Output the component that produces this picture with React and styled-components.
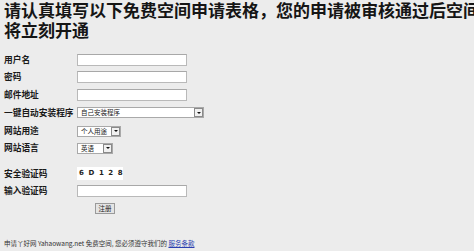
import React from 'react';
import styled, { createGlobalStyle } from 'styled-components';

const cjk = 'font-family: "Noto Sans CJK SC", "Liberation Sans", sans-serif;';

const GlobalStyle = createGlobalStyle`
	html, body {
		margin: 0;
		padding: 0;
		background: #ececec;
		overflow: hidden;
	}
	body {
		width: 474px;
		height: 251px;
	}
`;

const Page = styled.div`
	${cjk}
	padding: 0 0 0 4px;
	color: #111;
`;

const Heading = styled.h1`
	${cjk}
	width: 480px;
	margin: 0;
	font-size: 17px;
	line-height: 20px;
	font-weight: 700;
	color: #151515;
`;

const Form = styled.div`
	display: flex;
	flex-direction: column;
	margin-top: 11px;
`;

const Row = styled.div`
	display: flex;
	align-items: center;
	height: ${props => props.h}px;
`;

const Spacer = styled.div`
	height: ${props => props.h}px;
`;

const Label = styled.div`
	width: 73px;
	flex-shrink: 0;
	font-size: 8.7px;
	font-weight: 700;
	line-height: 10px;
	color: #1a1a1a;
	white-space: nowrap;
`;

const TextBox = styled.div`
	box-sizing: border-box;
	width: 110px;
	height: 12px;
	background: #fff;
	border: 1px solid #b9b9b9;
	border-top-color: #a8a8a8;
`;

const Select = styled.div`
	box-sizing: border-box;
	display: flex;
	align-items: center;
	justify-content: space-between;
	width: ${props => props.w}px;
	height: 11px;
	background: #fff;
	border: 1px solid #a9a9a9;
	padding-left: 3px;
	font-size: 6.5px;
	line-height: 9px;
	color: #222;
`;

const DropButton = styled.div`
	box-sizing: border-box;
	display: flex;
	align-items: center;
	justify-content: center;
	width: 9px;
	height: 9px;
	background: #f1f1f1;
	border: 1px solid #8a8a8a;
	&::after {
		content: '';
		width: 0;
		height: 0;
		border-left: 2px solid transparent;
		border-right: 2px solid transparent;
		border-top: 2px solid #111;
	}
`;

const Captcha = styled.div`
	font-family: "DejaVu Sans", "Liberation Sans", sans-serif;
	background: #fff;
	height: 13px;
	width: 46px;
	box-sizing: border-box;
	padding-left: 2px;
	font-size: 7px;
	font-weight: 700;
	line-height: 13px;
	letter-spacing: 4.6px;
	color: #222;
	white-space: nowrap;
`;

const SubmitRow = styled(Row)`
	padding-left: 91px;
`;

const Button = styled.div`
	box-sizing: border-box;
	width: 20px;
	height: 11px;
	background: #e4e4e4;
	border: 1px solid #9a9a9a;
	font-size: 6.5px;
	line-height: 9px;
	text-align: center;
	color: #222;
`;

const Footer = styled.div`
	margin-top: 21px;
	font-size: 6.5px;
	line-height: 9px;
	color: #333;
	white-space: nowrap;
`;

const TermsLink = styled.a`
	color: #2b3fb0;
	text-decoration: underline;
`;

const SelectField = ({ w, value }) => (
	<Select w={w}>
		<span>{value}</span>
		<DropButton />
	</Select>
);

export default function App() {
	return (
		<Page>
			<GlobalStyle />
			<Heading>请认真填写以下免费空间申请表格，您的申请被审核通过后空间将立刻开通</Heading>
			<Form>
				<Row h={17}><Label>用户名</Label><TextBox /></Row>
				<Row h={18}><Label>密码</Label><TextBox /></Row>
				<Row h={17}><Label>邮件地址</Label><TextBox /></Row>
				<Row h={19}><Label>一键自动安装程序</Label><SelectField w={127} value="自己安装程序" /></Row>
				<Row h={18}><Label>网站用途</Label><SelectField w={44} value="个人用途" /></Row>
				<Row h={16}><Label>网站语言</Label><SelectField w={36} value="英语" /></Row>
				<Spacer h={9} />
				<Row h={17}><Label>安全验证码</Label><Captcha>6D128</Captcha></Row>
				<Row h={17}><Label>输入验证码</Label><TextBox /></Row>
				<SubmitRow h={19}><Button>注册</Button></SubmitRow>
			</Form>
			<Footer>
				申请丫好网 Yahaowang.net 免费空间, 您必须遵守我们的 <TermsLink href="#">服务条款</TermsLink>
			</Footer>
		</Page>
	);
}
